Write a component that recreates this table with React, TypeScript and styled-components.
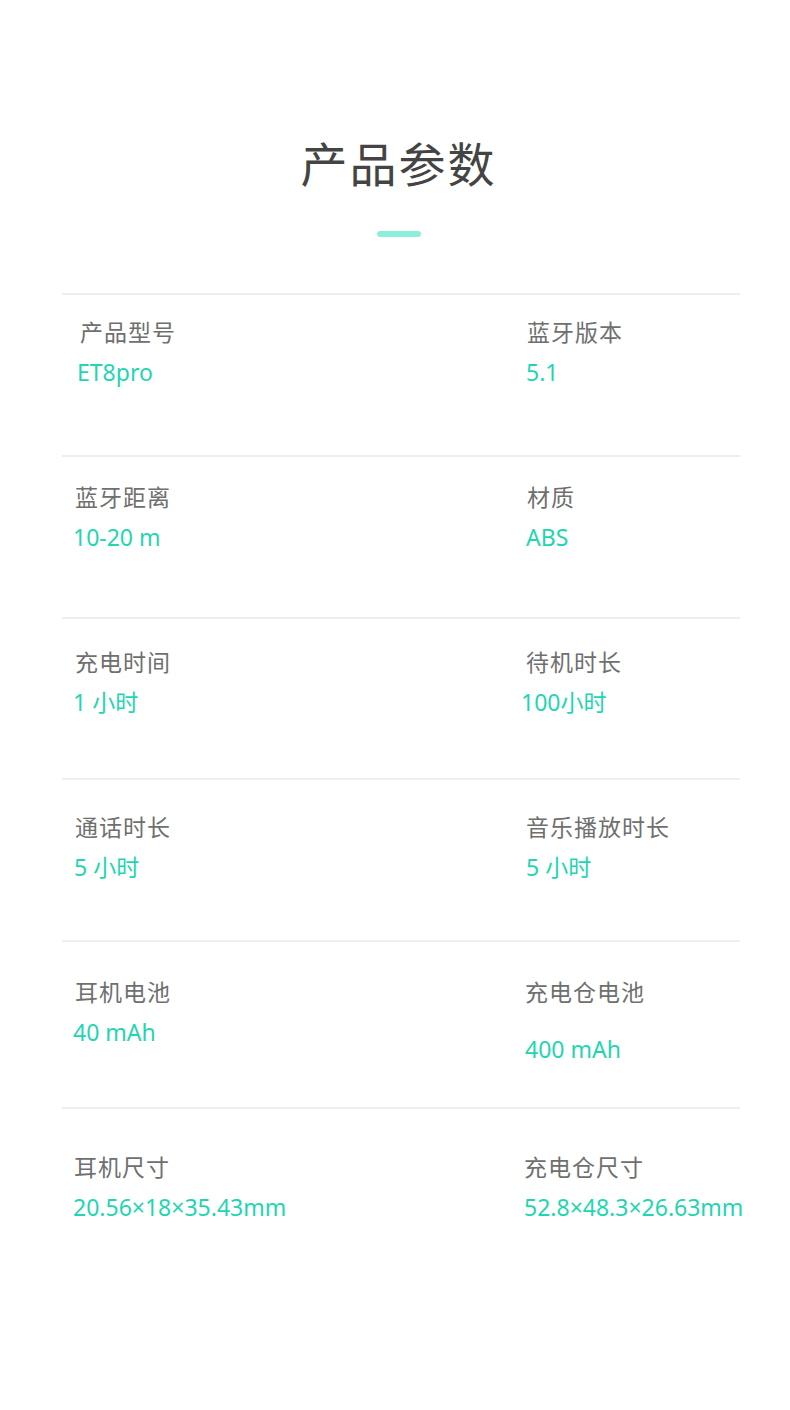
import { createGlobalStyle } from 'styled-components';
import styled from 'styled-components';

const GlobalStyle = createGlobalStyle`
    html, body {
        margin: 0;
        padding: 0;
        background: #fff;
    }
    body {
        font-family: 'Noto Sans', 'Noto Sans CJK SC', sans-serif;
    }
`;

type Spec = { label: string; value: string; labelX: number; valueX: number; valueGap?: number };
type RowData = { pad: number; height: number; cells: [Spec, Spec] };

const rows: RowData[] = [
    {
        pad: 21,
        height: 162,
        cells: [
            { label: '产品型号', value: 'ET8pro', labelX: 18, valueX: 15 },
            { label: '蓝牙版本', value: '5.1', labelX: 14, valueX: 13 },
        ],
    },
    {
        pad: 24,
        height: 162,
        cells: [
            { label: '蓝牙距离', value: '10-20 m', labelX: 13, valueX: 11 },
            { label: '材质', value: 'ABS', labelX: 14, valueX: 13 },
        ],
    },
    {
        pad: 27,
        height: 161,
        cells: [
            { label: '充电时间', value: '1 小时', labelX: 13, valueX: 11 },
            { label: '待机时长', value: '100小时', labelX: 13, valueX: 8 },
        ],
    },
    {
        pad: 31,
        height: 162,
        cells: [
            { label: '通话时长', value: '5 小时', labelX: 13, valueX: 12 },
            { label: '音乐播放时长', value: '5 小时', labelX: 13, valueX: 13 },
        ],
    },
    {
        pad: 34,
        height: 167,
        cells: [
            { label: '耳机电池', value: '40 mAh', labelX: 13, valueX: 11 },
            { label: '充电仓电池', value: '400 mAh', labelX: 12, valueX: 12, valueGap: 28 },
        ],
    },
    {
        pad: 42,
        height: 170,
        cells: [
            { label: '耳机尺寸', value: '20.56×18×35.43mm', labelX: 12, valueX: 11 },
            { label: '充电仓尺寸', value: '52.8×48.3×26.63mm', labelX: 11, valueX: 11 },
        ],
    },
];

export default function App() {
    return (
        <>
            <GlobalStyle />
            <Page>
                <Heading>
                    <Title>产品参数</Title>
                    <Accent />
                </Heading>
                <Table>
                    {rows.map((row, i) => (
                        <Row key={i} $pad={row.pad} $height={row.height}>
                            {row.cells.map((cell) => (
                                <Cell key={cell.label}>
                                    <Label $x={cell.labelX}>{cell.label}</Label>
                                    <Value $x={cell.valueX} $gap={cell.valueGap ?? 11}>
                                        {cell.value}
                                    </Value>
                                </Cell>
                            ))}
                        </Row>
                    ))}
                </Table>
            </Page>
        </>
    );
}

const Page = styled.div`
    width: 790px;
    min-height: 1410px;
    background: #fff;
    padding-top: 130px;
    box-sizing: border-box;
`;

const Heading = styled.div`
    display: flex;
    flex-direction: column;
    align-items: center;
    padding-left: 7px;
    margin-bottom: 56px;
`;

const Title = styled.h1`
    margin: 0;
    font-family: 'Noto Sans CJK SC', sans-serif;
    font-size: 47px;
    font-weight: 400;
    line-height: 64px;
    letter-spacing: 2px;
    color: #444;
`;

const Accent = styled.div`
    width: 44px;
    height: 6px;
    margin-top: 37px;
    border-radius: 3px;
    background: #8eeedc;
`;

const Table = styled.div`
    margin: 0 50px 0 62px;
`;

const Row = styled.div<{ $pad: number; $height: number }>`
    display: grid;
    grid-template-columns: 451px 1fr;
    height: ${(p) => p.$height}px;
    box-sizing: border-box;
    padding-top: ${(p) => p.$pad}px;
    border-top: 2px solid #eeeeee;
`;

const Cell = styled.div`
    display: flex;
    flex-direction: column;
    align-items: flex-start;
`;

const Label = styled.div<{ $x: number }>`
    padding-left: ${(p) => p.$x}px;
    font-family: 'Noto Sans CJK SC', sans-serif;
    font-size: 23px;
    line-height: 30px;
    letter-spacing: 1px;
    color: #6f6f6f;
`;

const Value = styled.div<{ $x: number; $gap: number }>`
    padding-left: ${(p) => p.$x}px;
    margin-top: ${(p) => p.$gap}px;
    font-family: 'Noto Sans', 'Noto Sans CJK SC', sans-serif;
    font-size: 23px;
    line-height: 30px;
    color: #1fd5b2;
    white-space: nowrap;
`;
